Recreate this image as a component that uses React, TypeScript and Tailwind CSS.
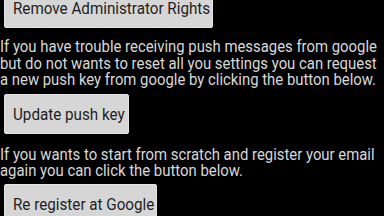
import React from "react";

function Btn({ children, w }: { children: React.ReactNode; w: string }) {
  return (
    <div
      className={`${w} h-[40px] ml-[4px] flex items-center pl-[8px] pt-[2px] bg-[#d6d6d6] border border-[#e4e4e4] rounded-[2px] text-[#1e1e1e] text-[16px] whitespace-nowrap`}
    >
      <span className="inline-block scale-x-[0.95] origin-left">{children}</span>
    </div>
  );
}

export default function App() {
  return (
    <div
      className="w-[384px] h-[216px] overflow-hidden bg-black"
      style={{ fontFamily: "Roboto, 'Noto Sans', sans-serif" }}
    >
      <div className="-mt-[12px] flex flex-col">
        <Btn w="w-[209px]">Remove Administrator Rights</Btn>
        <p className="mt-[11px] text-[16px] leading-[16.5px] text-[#d8d8d8] whitespace-nowrap scale-x-[0.93] origin-left">
          If you have trouble receiving push messages from google
          <br />
          but do not wants to reset all you settings you can request
          <br />
          a new push key from google by clicking the button below.
        </p>
        <div className="mt-[5px]">
          <Btn w="w-[125px]">Update push key</Btn>
        </div>
        <p className="mt-[13px] text-[16px] leading-[16.5px] text-[#d8d8d8] whitespace-nowrap scale-x-[0.93] origin-left">
          If you wants to start from scratch and register your email
          <br />
          again you can click the button below.
        </p>
        <div className="mt-[4px]">
          <Btn w="w-[153px]">Re register at Google</Btn>
        </div>
      </div>
    </div>
  );
}
